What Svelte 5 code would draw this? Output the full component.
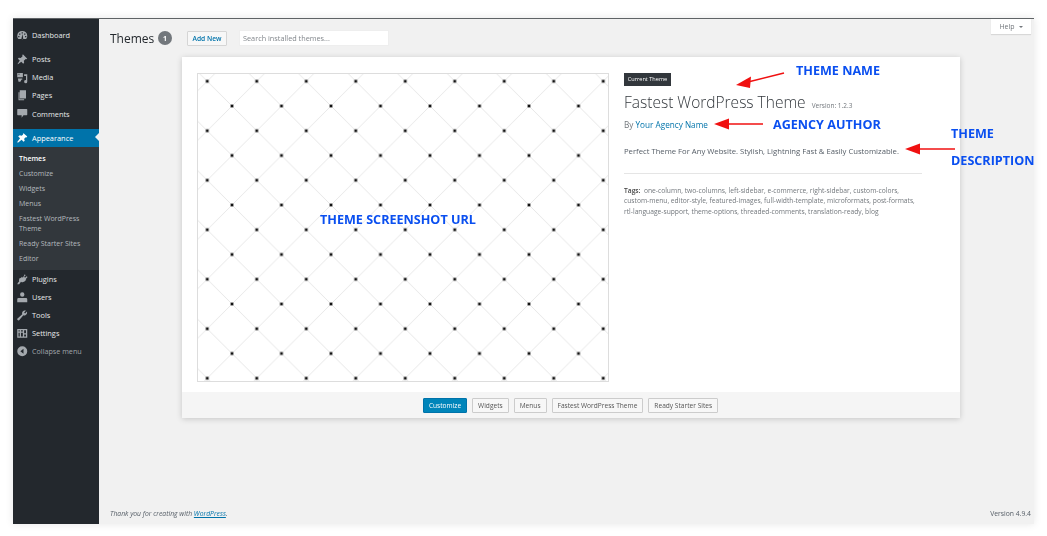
<script lang="ts">
  const topMenu = [
    { label: 'Posts', icon: 'pin' },
    { label: 'Media', icon: 'media' },
    { label: 'Pages', icon: 'pages' },
    { label: 'Comments', icon: 'comment' }
  ]
  const subMenu = ['Customize', 'Widgets', 'Menus', 'Fastest WordPress Theme', 'Ready Starter Sites', 'Editor']
  const lowerMenu = [
    { label: 'Plugins', icon: 'plug' },
    { label: 'Users', icon: 'user' },
    { label: 'Tools', icon: 'wrench' },
    { label: 'Settings', icon: 'settings' }
  ]
  const actions = ['Widgets', 'Menus', 'Fastest WordPress Theme', 'Ready Starter Sites']

  const icons: Record<string, string> = {
    gauge: 'M10 3a8 8 0 0 0-8 8c0 2 .7 3.800 2 5h12c1.300-1.200 2-3 2-5a8 8 0 0 0-8-8zM9 5h2v2H9zM5 7h2v2H5zm8 0h2v2h-2zM3.500 11h2v2h-2zm11 0h2v2h-2zM9 14l1.500-6 .8 6a1.500 1.500 0 1 1-2.300 0z',
    pin: 'M11 2l7 7-1.500 1-1-.5-3 3 .5 3-1.500 1.500-3-3L3 18l-.5-.5L6 12 3 9l1.500-1.500 3 .5 3-3-.5-1z',
    media: 'M2 3h9v7H2zm2 1.500v1.500h1.500V4.500zM13 5h5v12a2.500 2.500 0 1 1-2-2.400V8h-3zM3 12h7v2H8a2 2 0 0 1-2 3H4z',
    pages: 'M6 2h10v13H6zM4 5v13h9v-1.500H5.500V5z',
    comment: 'M3 3h14a1 1 0 0 1 1 1v8a1 1 0 0 1-1 1h-5l-3 4v-4H3a1 1 0 0 1-1-1V4a1 1 0 0 1 1-1z',
    brush: 'M12 2l6 5-2 2-1-.5-2 2.500 1 3-2 1.500-3-3-6 4.500-1-1 4.500-6-3-3L6 5l3 1 2.500-2L11 3z',
    plug: 'M14 2l1.500 1.500-2.500 2.500 1.500 1.500L17 5l1.500 1.500-3 3.500 1 1-2 1.500C13 15 10 15.500 8 14l-3 4H2c.5-2 1.500-3.500 3-4.500-.5-2 0-4.500 1.500-6l1 1 2-2.500 1.500 1.500z',
    user: 'M10 2a3.500 3.500 0 1 1 0 7 3.500 3.500 0 0 1 0-7zM4 11h12a2 2 0 0 1 2 2v5H2v-5a2 2 0 0 1 2-2z',
    wrench: 'M16 2.500l-3 3 1.500 1.500 3-3c.8 2.500 0 5-2.500 6-1.200.5-2.200.4-3.200 0L5 18c-1 1-3.500-.5-3-2.500l8-7c-.5-1.200-.5-2.300 0-3.500 1-2.300 3.500-3.300 6-2.500z',
    settings: 'M2 3h16v14H2zm2 2v2h2V5zm4 0v2h3V5zm5 0v5h3V5zM4 9v6h2V9zm4 0v6h3V9zm5 3v3h3v-3z',
    collapse: 'M10 2a8 8 0 1 1 0 16 8 8 0 0 1 0-16zm2 4L7 10l5 4z'
  }
</script>

{#snippet icon(name: string)}
  <svg class="icon" viewBox="0 0 20 20"><path d={icons[name]} /></svg>
{/snippet}

<div class="page">
  <div class="window">
    <nav class="sidebar">
      <a class="item first">{@render icon('gauge')}Dashboard</a>
      <div class="group">
        {#each topMenu as m}
          <a class="item">{@render icon(m.icon)}{m.label}</a>
        {/each}
      </div>
      <a class="item current">{@render icon('brush')}Appearance<span class="notch"></span></a>
      <ul class="sub">
        <li class="on">Themes</li>
        {#each subMenu as s}
          <li>{s}</li>
        {/each}
      </ul>
      <div class="lower">
        {#each lowerMenu as m}
          <a class="item">{@render icon(m.icon)}{m.label}</a>
        {/each}
        <a class="item collapse">{@render icon('collapse')}Collapse menu</a>
      </div>
    </nav>

    <main class="content">
      <div class="help">Help <span class="caret"></span></div>
      <header class="head">
        <h1>Themes</h1>
        <span class="count">1</span>
        <button class="add">Add New</button>
        <input class="search" placeholder="Search installed themes..." />
      </header>

      <section class="card">
        <div class="details">
          <div class="shot">
            <svg width="100%" height="100%">
              <defs>
                <pattern id="diamonds" x="-15.500" y="-17.500" width="49.500" height="49.500" patternUnits="userSpaceOnUse">
                  <path d="M0 0L49.500 49.500M49.500 0L0 49.500" stroke="#e0e0e0" stroke-width="0.800" fill="none" />
                  <rect x="-1.400" y="-1.400" width="2.800" height="2.800" fill="#111" />
                  <rect x="48.100" y="-1.400" width="2.800" height="2.800" fill="#111" />
                  <rect x="-1.400" y="48.100" width="2.800" height="2.800" fill="#111" />
                  <rect x="48.100" y="48.100" width="2.800" height="2.800" fill="#111" />
                  <rect x="23.350" y="23.350" width="2.800" height="2.800" fill="#111" />
                </pattern>
              </defs>
              <rect width="100%" height="100%" fill="url(#diamonds)" />
            </svg>
          </div>
          <div class="info">
            <span class="tag">Current Theme</span>
            <h2>Fastest WordPress Theme <small>Version: 1.2.3</small></h2>
            <p class="author">By <a>Your Agency Name</a></p>
            <p class="desc">Perfect Theme For Any Website. Stylish, Lightning Fast &amp; Easily Customizable.</p>
            <p class="tags"><b>Tags:</b>&nbsp; one-column, two-columns, left-sidebar, e-commerce, right-sidebar, custom-colors, custom-menu, editor-style, featured-images, full-width-template, microformats, post-formats, rtl-language-support, theme-options, threaded-comments, translation-ready, blog</p>
          </div>
        </div>
        <div class="actions">
          <button class="primary">Customize</button>
          {#each actions as a}
            <button>{a}</button>
          {/each}
        </div>
      </section>

      <footer class="foot">
        <em>Thank you for creating with <a>WordPress</a>.</em>
        <span>Version 4.9.4</span>
      </footer>
    </main>
  </div>

  <!-- annotations drawn on top of the screenshot -->
  <svg class="arrows" width="1047" height="536">
    <path d="M784 73L746 82.500" />
    <path d="M736 85L751 76.500L750 88z" class="head-fill" />
    <path d="M763 124L724 124" />
    <path d="M714 124L729 118.500L729 129.500z" class="head-fill" />
    <path d="M955 149L915 149" />
    <path d="M905 149L920 143.500L920 154.500z" class="head-fill" />
  </svg>
  <span class="note n1">THEME NAME</span>
  <span class="note n2">AGENCY AUTHOR</span>
  <span class="note n3">THEME</span>
  <span class="note n4">DESCRIPTION</span>
  <span class="note n5">THEME SCREENSHOT URL</span>
</div>

<style>
  :global(body) {
    margin: 0;
    background: #fff;
  }

  .page {
    position: relative;
    width: 1047px;
    height: 536px;
    box-sizing: border-box;
    padding: 18px 13px 13px;
    overflow: hidden;
    font-family: 'Open Sans', 'Noto Sans', sans-serif;
    filter: blur(0.45px);
  }

  .window {
    display: flex;
    height: 505px;
    border-top: 1.500px solid #5f6366;
    box-shadow: 0 0 8px rgba(0, 0, 0, 0.1);
    background: #f1f1f1;
  }

  .sidebar {
    width: 85.500px;
    flex: none;
    background: #23282d;
    color: #e6e8e9;
    font-size: 7.400px;
  }

  .item {
    display: flex;
    align-items: center;
    height: 18.150px;
    padding-left: 3px;
    position: relative;
  }

  .icon {
    width: 12.500px;
    height: 12.500px;
    margin-right: 3.500px;
    fill: #a4a9ae;
    flex: none;
  }

  .first {
    margin-top: 7px;
  }

  .group {
    margin-top: 6px;
    margin-bottom: 6px;
  }

  .current {
    background: #0073aa;
    color: #fff;
  }

  .current .icon {
    fill: #fff;
  }

  .notch {
    position: absolute;
    right: 0;
    top: 4.500px;
    border: 4.500px solid transparent;
    border-right-color: #f1f1f1;
    border-left: 0;
  }

  .sub {
    list-style: none;
    margin: 0;
    padding: 5px 6px 3px;
    background: #32373c;
    color: #b4b9be;
    font-size: 7px;
    line-height: 10px;
  }

  .sub li {
    padding: 2.500px 0;
  }

  .sub .on {
    color: #fff;
    font-weight: 600;
  }

  .collapse {
    color: #a0a5aa;
    font-size: 7.200px;
  }

  .content {
    position: relative;
    flex: 1;
    min-width: 0;
    display: flex;
    flex-direction: column;
    padding: 0 3px 0 11.500px;
    color: #444;
  }

  .help {
    position: absolute;
    right: 3px;
    top: 0;
    width: 40px;
    height: 15px;
    box-sizing: border-box;
    background: #fff;
    box-shadow: 0 1px 1px rgba(0, 0, 0, 0.1);
    color: #72777c;
    font-size: 7px;
    display: flex;
    align-items: center;
    justify-content: center;
    gap: 4px;
  }

  .caret {
    border: 2.500px solid transparent;
    border-top-color: #72777c;
    border-bottom: 0;
  }

  .head {
    display: flex;
    align-items: center;
    height: 16px;
    margin-top: 11px;
  }

  h1 {
    margin: 0;
    width: 48px;
    font-size: 12px;
    font-weight: 400;
    color: #23282d;
  }

  .count {
    width: 14px;
    height: 14px;
    border-radius: 50%;
    background: #72777c;
    color: #fff;
    font-size: 7px;
    font-weight: 700;
    display: flex;
    align-items: center;
    justify-content: center;
  }

  .add {
    margin-left: 15px;
    width: 40px;
    height: 15px;
    padding: 0;
    border: 1px solid #d5d5d5;
    border-radius: 1px;
    background: #f7f7f7;
    color: #0073aa;
    font: 600 6.700px 'Open Sans', 'Noto Sans', sans-serif;
  }

  .search {
    margin-left: 12px;
    width: 150px;
    height: 16px;
    box-sizing: border-box;
    padding: 0 3px;
    border: 1px solid #eee;
    background: #fff;
    font: 7.300px 'Open Sans', 'Noto Sans', sans-serif;
  }

  .search::placeholder {
    color: #82878c;
  }

  .card {
    margin: 11px 0 0 72px;
    width: 778px;
    background: #fff;
    box-shadow: 0 1px 6px rgba(0, 0, 0, 0.18);
  }

  .details {
    display: flex;
    height: 335px;
    box-sizing: border-box;
    padding: 16px 15px 0;
  }

  .shot {
    width: 412px;
    height: 309px;
    flex: none;
    box-sizing: border-box;
    border: 1px solid #ddd;
  }

  .shot svg {
    display: block;
  }

  .info {
    margin-left: 15px;
    width: 298px;
  }

  .tag {
    display: block;
    width: 47px;
    height: 13px;
    line-height: 13px;
    text-align: center;
    background: #32373c;
    color: #fff;
    font-size: 5.600px;
  }

  h2 {
    margin: 5px 0 0;
    font-size: 15.500px;
    line-height: 22px;
    font-weight: 300;
    color: #32373c;
  }

  small {
    font-size: 6.500px;
    font-weight: 400;
    color: #72777c;
    margin-left: 2px;
  }

  .author {
    margin: 2px 0 0;
    font-size: 8.200px;
    line-height: 12px;
    color: #72777c;
  }

  .author a {
    color: #0073aa;
  }

  .desc {
    margin: 14px 0 0;
    font-size: 7.700px;
    line-height: 12px;
    color: #555d66;
    padding-bottom: 16px;
    border-bottom: 1px solid #e5e5e5;
    white-space: nowrap;
  }

  .tags {
    margin: 12px 0 0;
    font-size: 6.700px;
    line-height: 10.300px;
    color: #72777c;
  }

  .tags b {
    font-weight: 600;
    color: #444;
  }

  .actions {
    height: 26px;
    background: #f5f5f5;
    display: flex;
    align-items: center;
    justify-content: center;
    gap: 5px;
    padding-right: 1px;
  }

  .actions button {
    height: 15px;
    padding: 0 5px;
    border: 1px solid #ccc;
    border-radius: 1px;
    background: #f7f7f7;
    color: #555;
    font: 6.600px 'Open Sans', 'Noto Sans', sans-serif;
    white-space: nowrap;
  }

  .actions .primary {
    background: #0085ba;
    border-color: #0073aa;
    color: #fff;
  }

  .foot {
    margin-top: auto;
    height: 15px;
    display: flex;
    justify-content: space-between;
    font-size: 6.800px;
    color: #555d66;
  }

  .foot a {
    color: #0073aa;
    text-decoration: underline;
  }

  .arrows {
    position: absolute;
    left: 0;
    top: 0;
    pointer-events: none;
  }

  .arrows path {
    stroke: #f01010;
    stroke-width: 1.600px;
    fill: none;
  }

  .arrows .head-fill {
    fill: #f01010;
    stroke: none;
  }

  .note {
    position: absolute;
    color: #0a4ff0;
    font-size: 12.600px;
    line-height: 14px;
    font-weight: 700;
    white-space: nowrap;
  }

  .n1 { left: 796px; top: 64px; }
  .n2 { left: 773px; top: 118px; }
  .n3 { left: 951px; top: 127px; }
  .n4 { left: 951px; top: 154px; }
  .n5 { left: 320px; top: 213px; }
</style>
